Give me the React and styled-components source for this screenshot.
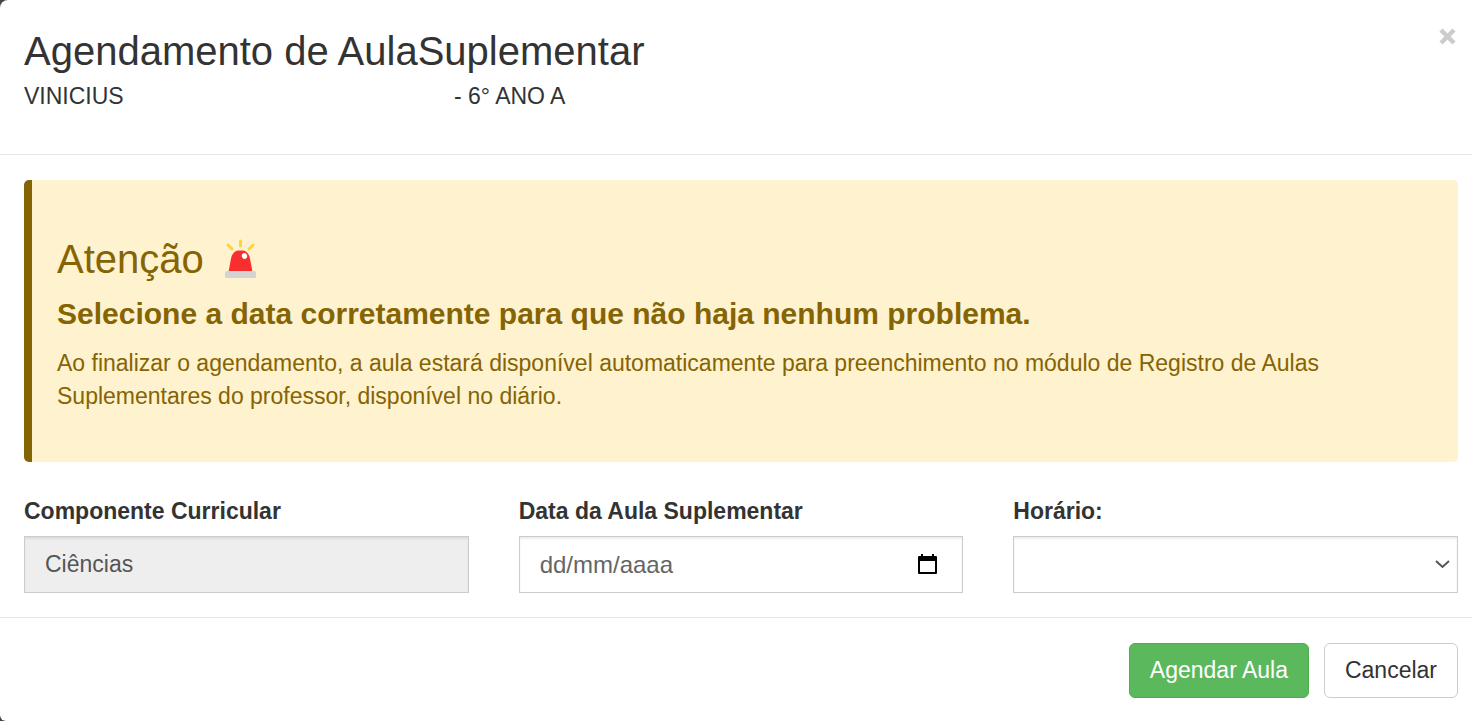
import React from "react";
import styled, { createGlobalStyle } from "styled-components";

const GlobalStyle = createGlobalStyle`
  * {
    box-sizing: border-box;
  }

  body {
    margin: 0;
    background: #444;
    color: #333;
    font-family: "Liberation Sans", Arial, sans-serif;
    font-size: 23px;
    line-height: 33px;
  }
`;

export const Modal = styled.div`
  min-height: 100vh;
  background: #fff;
  border-radius: 8px 0 0 6px;
`;

export const ModalHeader = styled.header`
  display: flex;
  align-items: flex-start;
  justify-content: space-between;
  padding: 24px 14px 41px 24px;
  border-bottom: 1px solid #e5e5e5;
`;

export const ModalTitle = styled.h1`
  margin: 0 0 2px;
  font-size: 40px;
  font-weight: normal;
  line-height: 54px;
`;

export const Student = styled.p`
  display: flex;
  margin: 0;
`;

export const StudentName = styled.span`
  width: 430px;
`;

export const CloseButton = styled.button`
  display: flex;
  padding: 4px 2px;
  border: 0;
  background: transparent;
  color: #ccc;
  cursor: pointer;
`;

export const ModalBody = styled.main`
  padding: 25px 14px 24px 24px;
`;

export const Alert = styled.section`
  padding: 57px 25px 49px;
  border-left: 8px solid #856404;
  border-radius: 5px;
  background: #fff2ce;
  color: #856404;
`;

export const AlertTitle = styled.h2`
  display: flex;
  align-items: center;
  gap: 21px;
  margin: 0 0 16px;
  font-size: 40px;
  font-weight: normal;
  line-height: 44px;
`;

export const AlertSubtitle = styled.h3`
  margin: 0 0 17px;
  font-size: 30px;
  line-height: 33px;
`;

export const AlertText = styled.p`
  margin: 0;
`;

export const Fields = styled.form`
  display: grid;
  grid-template-columns: repeat(3, 1fr);
  gap: 50px;
  margin-top: 33px;
`;

export const Field = styled.div`
  display: flex;
  flex-direction: column;
  gap: 8px;
`;

export const Label = styled.label`
  font-weight: bold;
`;

export const Control = styled.div`
  display: flex;
  align-items: center;
  height: 57px;
  padding-right: ${(props) => props.$end || "20px"};
  border: 1px solid #ccc;
  background: ${(props) => (props.$disabled ? "#eee" : "#fff")};
  box-shadow: inset 0 2px 2px rgba(0, 0, 0, 0.075);
  color: #555;
`;

export const Input = styled.input`
  flex: 1;
  min-width: 0;
  height: 100%;
  padding: 0 0 0 20px;
  border: 0;
  outline: 0;
  background: transparent;
  color: #555;
  font-family: inherit;
  font-size: ${(props) => (props.$date ? "24px" : "23px")};

  &::placeholder {
    color: #666;
    opacity: 1;
  }
`;

export const PickerButton = styled.button`
  display: flex;
  padding: 0 4px;
  border: 0;
  background: transparent;
  color: #000;
`;

// The arrow lies over the select so the whole box stays clickable
export const SelectBox = styled.div`
  position: relative;
  flex: 1;
  height: 100%;

  svg {
    position: absolute;
    top: 50%;
    right: 0;
    margin-top: -5px;
    pointer-events: none;
  }
`;

export const Select = styled.select`
  width: 100%;
  height: 100%;
  padding: 0 20px;
  border: 0;
  outline: 0;
  appearance: none;
  background: transparent;
  color: #555;
  font-family: inherit;
  font-size: 23px;
`;

export const ModalFooter = styled.footer`
  display: flex;
  justify-content: flex-end;
  gap: 15px;
  padding: 25px 14px 23px;
  border-top: 1px solid #e5e5e5;
`;

export const Button = styled.button`
  height: 55px;
  padding: 0 20px;
  border: 1px solid ${(props) => (props.$success ? "#4cae4c" : "#ccc")};
  border-radius: 6px;
  background: ${(props) => (props.$success ? "#5cb85c" : "#fff")};
  color: ${(props) => (props.$success ? "#fff" : "#333")};
  font-family: inherit;
  font-size: 23px;
  cursor: pointer;
`;

function SirenIcon() {
  return (
    <svg width="32" height="40" viewBox="0 0 32 40" aria-hidden="true">
      <g stroke="#ffd43b" strokeWidth="3" strokeLinecap="round">
        <path d="M15.500 2v5" />
        <path d="M3 6l4 4" />
        <path d="M28 6l-4 4" />
      </g>
      <path
        d="M3.500 33L6 19.500C7 14.500 10 11.500 13.500 11.500H17.500C21 11.500 24 14.500 25 19.500L27.500 33z"
        fill="#f92f2f"
      />
      <ellipse
        cx="19.500"
        cy="17"
        rx="2.600"
        ry="3"
        fill="#fff"
        transform="rotate(-20 19.500 17)"
      />
      <rect x="0" y="32" width="31" height="7" rx="1.500" fill="#d3d3d3" />
    </svg>
  );
}

export default function App() {
  return (
    <>
      <GlobalStyle />
      <Modal role="dialog" aria-labelledby="modal-title">
        <ModalHeader>
          <div>
            <ModalTitle id="modal-title">
              Agendamento de AulaSuplementar
            </ModalTitle>
            <Student>
              <StudentName>VINICIUS</StudentName>
              <span>- 6° ANO A</span>
            </Student>
          </div>
          <CloseButton type="button" aria-label="Fechar">
            <svg width="17" height="17" viewBox="0 0 17 17">
              <path
                d="M2 2l13 13M15 2l-13 13"
                stroke="currentColor"
                strokeWidth="4.500"
              />
            </svg>
          </CloseButton>
        </ModalHeader>

        <ModalBody>
          <Alert>
            <AlertTitle>
              Atenção
              <SirenIcon />
            </AlertTitle>
            <AlertSubtitle>
              Selecione a data corretamente para que não haja nenhum problema.
            </AlertSubtitle>
            <AlertText>
              Ao finalizar o agendamento, a aula estará disponível
              automaticamente para preenchimento no módulo de Registro de Aulas
              Suplementares do professor, disponível no diário.
            </AlertText>
          </Alert>

          <Fields id="agendamento">
            <Field>
              <Label htmlFor="componente">Componente Curricular</Label>
              <Control $disabled>
                <Input id="componente" defaultValue="Ciências" disabled />
              </Control>
            </Field>
            <Field>
              <Label htmlFor="data">Data da Aula Suplementar</Label>
              <Control>
                <Input id="data" placeholder="dd/mm/aaaa" $date />
                <PickerButton type="button" aria-label="Abrir calendário">
                  <svg width="20" height="21" viewBox="0 0 20 21">
                    <path
                      d="M3 0h2v2h9V0h2v2h2a1 1 0 0 1 1 1v16a1 1 0 0 1-1 1H1a1 1 0 0 1-1-1V3a1 1 0 0 1 1-1h2zM2 7v11h15V7z"
                      fill="currentColor"
                      fillRule="evenodd"
                    />
                  </svg>
                </PickerButton>
              </Control>
            </Field>
            <Field>
              <Label htmlFor="horario">Horário:</Label>
              <Control $end="7px">
                <SelectBox>
                  <Select id="horario" defaultValue="">
                    <option value=""></option>
                  </Select>
                  <svg width="15" height="9" viewBox="0 0 15 9">
                    <path
                      d="M1 1l6.500 6L14 1"
                      fill="none"
                      stroke="#555"
                      strokeWidth="2"
                    />
                  </svg>
                </SelectBox>
              </Control>
            </Field>
          </Fields>
        </ModalBody>

        <ModalFooter>
          <Button type="submit" form="agendamento" $success>
            Agendar Aula
          </Button>
          <Button type="button">Cancelar</Button>
        </ModalFooter>
      </Modal>
    </>
  );
}
